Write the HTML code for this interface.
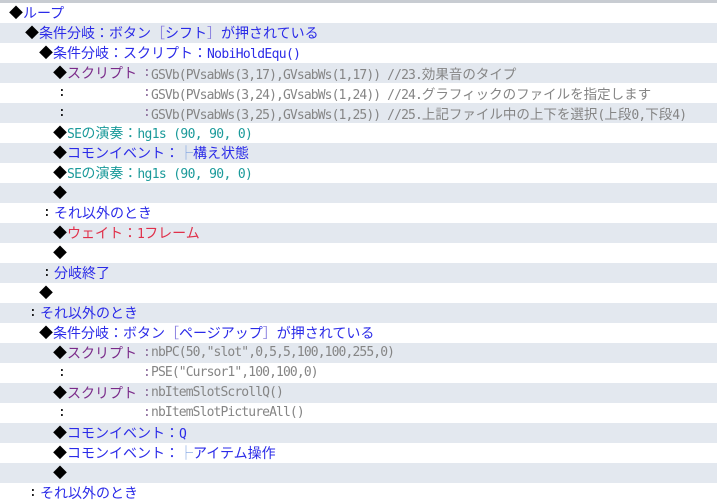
<!DOCTYPE html>
<html><head><meta charset="utf-8"><style>
body{margin:0;width:717px;height:495px;overflow:hidden;background:#fff;font-family:"Noto Sans CJK JP","DejaVu Sans",sans-serif;font-size:14px;}
.top{height:3px;background:#c8ccd2;}
.r{position:relative;height:20px;line-height:20px;white-space:nowrap;color:#2b2be8;}
.g{background:#e3e8ef;}
.r span{position:absolute;top:0;}
.m{font-family:"DejaVu Sans Mono","Liberation Mono",monospace;font-size:13px;letter-spacing:-0.65px;font-style:normal;}
.sm{font-family:"DejaVu Sans Mono","Liberation Mono",monospace;font-size:13px;letter-spacing:-0.88px;}
.j{font-style:normal;font-family:"Noto Sans CJK JP",sans-serif;font-size:13.5px;letter-spacing:0;}
.k{color:#000;}
.p{color:#7a2a8a;}
.s{color:#858585;}
.c{color:#8a6a9a;}
.t{color:#1a9a9a;}
.red{color:#e0304a;}
.b{color:#8a80e0;font-weight:normal;}
.lb{color:#7aa0e0;font-weight:normal;}
</style></head><body>
<div class="top"></div>
<div class="r"><span class="k" style="left:9px">◆</span><span style="left:23px">ループ</span></div>
<div class="r g"><span class="k" style="left:25px">◆</span><span style="left:39px">条件分岐：ボタン<b class="b">［</b>シフト<b class="b">］</b>が押されている</span></div>
<div class="r"><span class="k" style="left:39px">◆</span><span style="left:53px">条件分岐：スクリプト：<i class="m">NobiHoldEqu()</i></span></div>
<div class="r g"><span class="k" style="left:53px">◆</span><span class="p" style="left:67px">スクリプト</span><span class="c m" style="left:143px">:</span><span class="s sm" style="left:151px">GSVb(PVsabWs(3,17),GVsabWs(1,17)) //23.<i class="j">効果音のタイプ</i></span></div>
<div class="r"><span class="k m" style="left:58px">:</span><span class="c m" style="left:143px">:</span><span class="s sm" style="left:151px">GSVb(PVsabWs(3,24),GVsabWs(1,24)) //24.<i class="j">グラフィックのファイルを指定します</i></span></div>
<div class="r g"><span class="k m" style="left:58px">:</span><span class="c m" style="left:143px">:</span><span class="s sm" style="left:151px">GSVb(PVsabWs(3,25),GVsabWs(1,25)) //25.<i class="j">上記ファイル中の上下を選択</i>(<i class="j">上段</i>0,<i class="j">下段</i>4)</span></div>
<div class="r"><span class="k" style="left:53px">◆</span><span class="t" style="left:67px"><i class="m">SE</i>の演奏：<i class="m">hg1s (90, 90, 0)</i></span></div>
<div class="r g"><span class="k" style="left:53px">◆</span><span style="left:67px">コモンイベント：<b class="lb">├</b>構え状態</span></div>
<div class="r"><span class="k" style="left:53px">◆</span><span class="t" style="left:67px"><i class="m">SE</i>の演奏：<i class="m">hg1s (90, 90, 0)</i></span></div>
<div class="r g"><span class="k" style="left:53px">◆</span></div>
<div class="r"><span class="k m" style="left:43px">:</span><span style="left:54px">それ以外のとき</span></div>
<div class="r g"><span class="k" style="left:53px">◆</span><span class="red" style="left:67px">ウェイト：<i class="m">1</i>フレーム</span></div>
<div class="r"><span class="k" style="left:53px">◆</span></div>
<div class="r g"><span class="k m" style="left:43px">:</span><span style="left:54px">分岐終了</span></div>
<div class="r"><span class="k" style="left:39px">◆</span></div>
<div class="r g"><span class="k m" style="left:29px">:</span><span style="left:40px">それ以外のとき</span></div>
<div class="r"><span class="k" style="left:39px">◆</span><span style="left:53px">条件分岐：ボタン<b class="b">［</b>ページアップ<b class="b">］</b>が押されている</span></div>
<div class="r g"><span class="k" style="left:53px">◆</span><span class="p" style="left:67px">スクリプト</span><span class="c m" style="left:143px">:</span><span class="s sm" style="left:151px">nbPC(50,"slot",0,5,5,100,100,255,0)</span></div>
<div class="r"><span class="k m" style="left:58px">:</span><span class="c m" style="left:143px">:</span><span class="s sm" style="left:151px">PSE("Cursor1",100,100,0)</span></div>
<div class="r g"><span class="k" style="left:53px">◆</span><span class="p" style="left:67px">スクリプト</span><span class="c m" style="left:143px">:</span><span class="s sm" style="left:151px">nbItemSlotScrollQ()</span></div>
<div class="r"><span class="k m" style="left:58px">:</span><span class="c m" style="left:143px">:</span><span class="s sm" style="left:151px">nbItemSlotPictureAll()</span></div>
<div class="r g"><span class="k" style="left:53px">◆</span><span style="left:67px">コモンイベント：<i class="m">Q</i></span></div>
<div class="r"><span class="k" style="left:53px">◆</span><span style="left:67px">コモンイベント：<b class="lb">├</b>アイテム操作</span></div>
<div class="r g"><span class="k" style="left:53px">◆</span></div>
<div class="r"><span class="k m" style="left:29px">:</span><span style="left:40px">それ以外のとき</span></div>
</body></html>
